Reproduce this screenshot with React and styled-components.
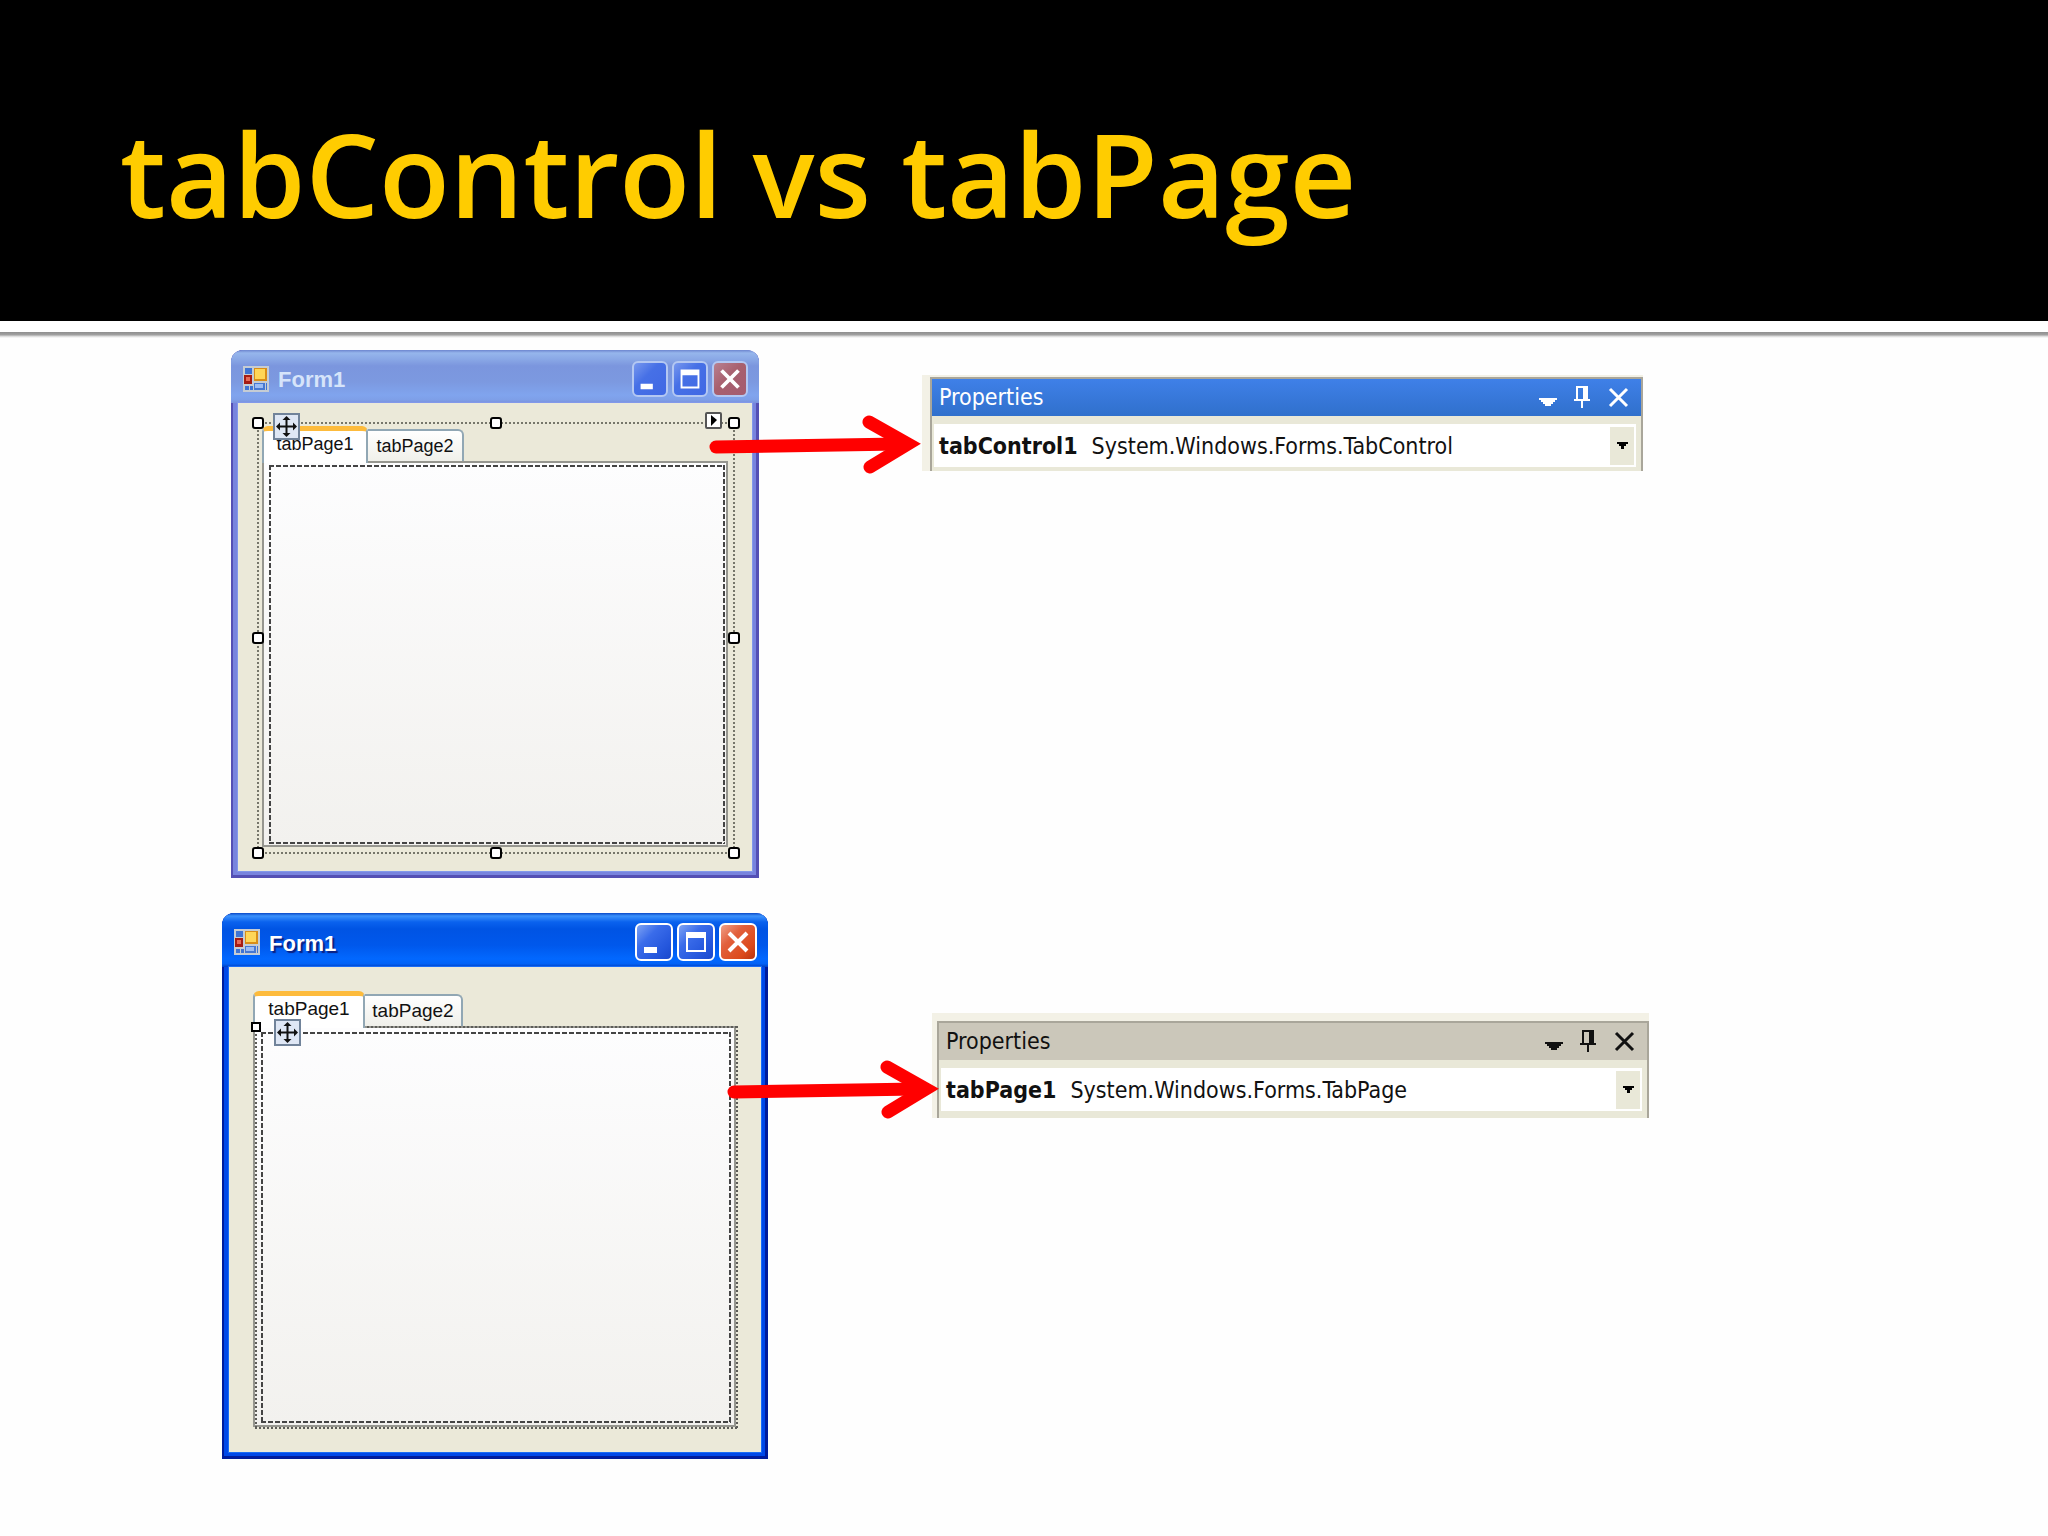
import { useId } from "react";
import styled, { createGlobalStyle, css } from "styled-components";

const GlobalStyle = createGlobalStyle`
    * {
        box-sizing: border-box;
    }
    body {
        margin: 0;
        background-color: #fefefe;
        font-family: "Liberation Sans", Arial, sans-serif;
    }
    button, select {
        font: inherit;
        color: inherit;
        margin: 0;
        padding: 0;
        border: 0;
        background: none;
    }
`;

const active = {
    frame: "#0048e8",
    edge: "#001c9c",
    light: "#1a6cf5",
    bar: "linear-gradient(#0a49c8 0, #3c92fc 3px, #0a62ee 9px, #0054e4 16px, #0058ec 60%, #0268ff 85%, #0262f6 94%, #0040c4 100%)",
    title: "#ffffff",
    titleShadow: "2px 2px 1px #0a1f80",
    buttonEdge: "#ffffff",
    button: "linear-gradient(135deg, #7fa4f4 0, #3a6cea 35%, #2456dc 75%, #1a48cc 100%)",
    close: "linear-gradient(135deg, #f0a088 0, #e2603c 35%, #dc4a1c 75%, #b83410 100%)",
};

const inactive = {
    frame: "#7884de",
    edge: "#5450b4",
    light: "#8298ea",
    bar: "linear-gradient(#6d85cf 0, #96b6ec 3px, #8aa8e6 9px, #7b96de 16px, #7c99e0 60%, #80a4ee 85%, #7e9fe8 94%, #7a90dc 100%)",
    title: "#d6e4fa",
    titleShadow: "none",
    buttonEdge: "#b4c8f2",
    button: "linear-gradient(135deg, #7898ee 0, #4670e6 40%, #4068e4 100%)",
    close: "linear-gradient(135deg, #b88090 0, #a8606e 45%, #a45c70 100%)",
};

const Header = styled.header`
    background-color: #000;
    padding: 93px 120px 68px;
`;

const Title = styled.h1`
    margin: 0;
    font-family: "Open Sans", "Noto Sans", sans-serif;
    font-size: 116px;
    font-weight: 600;
    line-height: 160px;
    color: #ffcc00;
`;

const Rule = styled.div`
    height: 17px;
    background: linear-gradient(#fff 11px, #8e8e8e 11px, #a2a2a2 14px, #d4d4d4 15px, #fefefe 17px);
`;

const Main = styled.main`
    display: flex;
    flex-direction: column;
    gap: 35px;
    padding: 12px 0 77px;
`;

const Row = styled.section`
    display: grid;
    grid-template-columns: ${(p) => p.$columns};
    align-items: start;
`;

const Window = styled.article`
    grid-column: 2;
    display: flex;
    flex-direction: column;
    aspect-ratio: 1;
    overflow: hidden;
    border-radius: 12px 12px 0 0;
    background-color: ${(p) => p.theme.frame};
    box-shadow: inset 2px 0 ${(p) => p.theme.edge}, inset -3px -3px ${(p) => p.theme.edge};
`;

const TitleBar = styled.div`
    display: flex;
    align-items: center;
    gap: 4px;
    height: ${(p) => p.$height};
    padding: 4px 11px 0 12px;
    background: ${(p) => p.theme.bar};
`;

const Caption = styled.h2`
    flex: 1;
    margin: 0;
    padding: 3px 0 0 5px;
    font-size: 22px;
    line-height: 26px;
    color: ${(p) => p.theme.title};
    text-shadow: ${(p) => p.theme.titleShadow};
`;

const CaptionButton = styled.button`
    width: ${(p) => p.$size};
    height: ${(p) => p.$size};
    border: 2px solid ${(p) => p.theme.buttonEdge};
    border-radius: 6px;
    background: ${(p) => (p.$close ? p.theme.close : p.theme.button)};

    svg {
        display: block;
        width: 100%;
    }
`;

const Client = styled.div`
    flex: 1;
    display: flex;
    margin: 0 7px 7px;
    padding: ${(p) => p.$padding};
    background-color: #ebe9d9;
    box-shadow: 0 0 0 1px ${(p) => p.theme.light};
`;

// dots or dashes along all four sides
const stitched = (on, period, color) => css`
    background-image:
        repeating-linear-gradient(90deg, ${color} 0 ${on}px, transparent ${on}px ${period}px),
        repeating-linear-gradient(90deg, ${color} 0 ${on}px, transparent ${on}px ${period}px),
        repeating-linear-gradient(${color} 0 ${on}px, transparent ${on}px ${period}px),
        repeating-linear-gradient(${color} 0 ${on}px, transparent ${on}px ${period}px);
    background-size: 100% 2px, 100% 2px, 2px 100%, 2px 100%;
    background-position: top, bottom, left, right;
    background-repeat: no-repeat;
`;

const TabControl = styled.div`
    position: relative;
    flex: 1;
    display: flex;
    flex-direction: column;
    ${(p) => p.$selected && css`
        padding: 4px 7px 7px 5px;
        ${stitched(2, 4, "#76766a")}
    `}
`;

const TabList = styled.div`
    display: flex;
    align-items: flex-end;
    height: 35px;
    font-size: ${(p) => p.$fontSize};
`;

const Tab = styled.button`
    width: ${(p) => p.$width};
    height: 32px;
    border: 2px solid #91a7b4;
    border-bottom: 0;
    border-left-width: 0;
    border-radius: 0 6px 0 0;
    background: linear-gradient(#fff, #f0f0ea);
    line-height: 26px;
    color: #111;

    &[aria-selected="true"] {
        position: relative;
        z-index: 1;
        height: 37px;
        margin-bottom: -2px;
        padding-bottom: 6px;
        border-left-width: 2px;
        border-top: 5px solid #fdbb3c;
        border-radius: 6px 6px 0 0;
        background: #fff;
    }
`;

const Page = styled.div`
    position: relative;
    flex: 1;
    display: flex;
    padding: 2px 1px 1px 5px;
    border: 2px solid #96968f;
    background: linear-gradient(#fdfdfe, #f2f1ee);

    ${(p) => p.$selected && css`
        padding: 4px 3px 2px 6px;
        &::after {
            content: "";
            position: absolute;
            inset: -2px -4px -4px 0;
            ${stitched(2, 4, "#5c5c58")}
        }
    `}
`;

const Grid = styled.div`
    flex: 1;
    ${stitched(5, 7, "#444")}
`;

const Handle = styled.span`
    position: absolute;
    z-index: 2;
    left: ${(p) => p.$x};
    top: ${(p) => p.$y};
    width: 12px;
    height: 12px;
    margin: -6px;
    border: 2px solid #000;
    border-radius: 3px;
    background-color: #fff;
`;

const PageHandle = styled(Handle)`
    width: 10px;
    height: 10px;
    margin: -5px;
    border-radius: 0;
`;

const MoveGlyph = styled.svg`
    position: absolute;
    z-index: 3;
    left: ${(p) => p.$left};
    top: ${(p) => p.$top};
    width: 27px;
    height: 27px;
`;

const SmartTag = styled.button`
    position: absolute;
    top: -10px;
    right: 13px;
    width: 17px;
    height: 17px;
    border: 2px solid #555;
    border-radius: 2px;
    background-color: #fff;

    svg {
        display: block;
        width: 100%;
    }
`;

const Arrow = styled.svg`
    grid-column: 3;
    position: relative;
    z-index: 2;
    width: 213px;
    height: 60px;
    margin: ${(p) => p.$margin};
`;

const Panel = styled.aside`
    grid-column: 4;
    margin-top: ${(p) => p.$top};
    padding: ${(p) => p.$padding};
    background-color: #f3f1e6;
    font-family: "DejaVu Sans Condensed", "DejaVu Sans", sans-serif;
    font-size: 23px;
    line-height: 28px;
`;

const PanelFrame = styled.div`
    padding-bottom: ${(p) => p.$bottom};
    border: 2px solid #a9a69a;
    border-bottom: 0;
    background-color: #e9e8d8;
`;

const PanelBar = styled.div`
    display: flex;
    align-items: center;
    height: 37px;
    padding: 0 11px 2px 7px;
    background: ${(p) => (p.$focused ? "linear-gradient(#3f80e8, #3070cc)" : "#cbc7ba")};
    color: ${(p) => (p.$focused ? "#fff" : "#111")};
`;

const PanelTitle = styled.h3`
    flex: 1;
    margin: 0;
    font-size: inherit;
    font-weight: 400;
`;

const PanelButton = styled.button`
    width: 22px;
    height: 24px;
    margin-left: 13px;

    svg {
        display: block;
    }
`;

const ObjectPicker = styled.div`
    display: flex;
    align-items: center;
    height: 43px;
    margin: 8px 5px 0 2px;
    padding: 3px 2px 3px 5px;
    background-color: #fff;
    color: #111;

    label {
        font-weight: 700;
    }
    select {
        flex: 1;
        height: 36px;
        margin-left: 14px;
        appearance: none;
        outline: 0;
    }
`;

const DropMark = styled.span`
    display: flex;
    align-items: center;
    justify-content: center;
    width: 24px;
    height: 38px;
    background-color: #e9e8d8;
`;

const FormIcon = () => (
    <svg width="26" height="26" viewBox="0 0 26 26" aria-hidden="true">
        <path fill="#c5ccd4" d="M0 0h26v26H0z" />
        <path fill="#3f74d4" d="M2 2h7v6H2zM2 20h4v4H2zM7 20h3v4H7zM23 17h1v7h-1z" />
        <path fill="#d98e18" d="M11 2h13v13H11z" />
        <path fill="#ffd657" d="M12 3h10v10H12z" />
        <path fill="#a61c14" d="M1 9h8v9H1z" />
        <path fill="#e66a58" d="M3 11h4v4H3z" />
        <path fill="#4778d2" d="M11 17h11v7H11z" />
        <path fill="#9cbcf4" d="M12 18h8v4h-8z" />
    </svg>
);

const Move = ({ left, top }) => (
    <MoveGlyph $left={left} $top={top} viewBox="0 0 27 27" aria-hidden="true">
        <rect x="1" y="1" width="25" height="25" fill="#dfe7f5" stroke="#71839a" strokeWidth="2" />
        <path stroke="#111" strokeWidth="2" d="M13.5 5v17M5 13.5h17" />
        <path fill="#111" d="M13.5 3l4 4h-8zM13.5 24l4-4h-8zM3 13.5l4-4v8zM24 13.5l-4-4v8z" />
    </MoveGlyph>
);

const FormWindow = ({ theme, barHeight, buttonSize, padding, children }) => (
    <Window theme={theme}>
        <TitleBar theme={theme} $height={barHeight}>
            <FormIcon />
            <Caption theme={theme}>Form1</Caption>
            <CaptionButton theme={theme} $size={buttonSize} aria-label="Minimize">
                <svg viewBox="0 0 34 34"><path fill="#fff" d="M7 22h13v6H7z" /></svg>
            </CaptionButton>
            <CaptionButton theme={theme} $size={buttonSize} aria-label="Maximize">
                <svg viewBox="0 0 34 34"><path fill="#fff" fillRule="evenodd" d="M7 7h20v20H7zM9 13h16v12H9z" /></svg>
            </CaptionButton>
            <CaptionButton theme={theme} $size={buttonSize} $close aria-label="Close">
                <svg viewBox="0 0 34 34"><path stroke="#fff" strokeWidth="4" d="M8 8l18 18M26 8L8 26" /></svg>
            </CaptionButton>
        </TitleBar>
        <Client theme={theme} $padding={padding}>{children}</Client>
    </Window>
);

const Tabs = ({ fontSize, widths }) => (
    <TabList role="tablist" $fontSize={fontSize}>
        <Tab role="tab" aria-selected="true" $width={widths[0]}>tabPage1</Tab>
        <Tab role="tab" aria-selected="false" $width={widths[1]}>tabPage2</Tab>
    </TabList>
);

const Connector = ({ margin }) => (
    <Arrow $margin={margin} viewBox="0 0 213 60" fill="none" stroke="#f00" strokeWidth="13" strokeLinecap="round" aria-hidden="true">
        <path d="M7 33L190 30" />
        <path d="M160 8L199 30L161 53" />
    </Arrow>
);

const Properties = ({ name, type, focused, top, padding, bottom }) => {
    const id = useId();

    return (
        <Panel $top={top} $padding={padding}>
            <PanelFrame $bottom={bottom}>
                <PanelBar $focused={focused}>
                    <PanelTitle>Properties</PanelTitle>
                    <PanelButton aria-label="Window position">
                        <svg width="22" height="24" viewBox="0 0 22 24"><path fill="currentColor" d="M1 13h18v2h-2v2h-2v2h-2v2H7v-2H5v-2H3v-2H1z" /></svg>
                    </PanelButton>
                    <PanelButton aria-label="Auto hide">
                        <svg width="22" height="24" viewBox="0 0 22 24"><path fill="currentColor" fillRule="evenodd" d="M3 1h12v13h2v2h-7v7H8v-7H1v-2h2zM5 3v11h5V3z" /></svg>
                    </PanelButton>
                    <PanelButton aria-label="Close">
                        <svg width="22" height="24" viewBox="0 0 22 24"><path stroke="currentColor" strokeWidth="3" d="M2 4l17 17M19 4L2 21" /></svg>
                    </PanelButton>
                </PanelBar>
                <ObjectPicker>
                    <label htmlFor={id}>{name}</label>
                    <select id={id}>
                        <option>{type}</option>
                    </select>
                    <DropMark>
                        <svg width="11" height="7" viewBox="0 0 11 7"><path fill="#000" d="M0 0h11v2H9v2H7v3H4V4H2V2H0z" /></svg>
                    </DropMark>
                </ObjectPicker>
            </PanelFrame>
        </Panel>
    );
};

const HANDLES = [
    ["1px", "1px"],
    ["50%", "1px"],
    ["calc(100% - 1px)", "1px"],
    ["1px", "50%"],
    ["calc(100% - 1px)", "50%"],
    ["1px", "calc(100% - 1px)"],
    ["50%", "calc(100% - 1px)"],
    ["calc(100% - 1px)", "calc(100% - 1px)"],
];

export default function App() {
    return (
        <>
            <GlobalStyle />
            <Header>
                <Title>tabControl vs tabPage</Title>
            </Header>
            <Rule />
            <Main>
                <Row $columns="231fr 528fr 163fr 721fr 405fr">
                    <FormWindow theme={inactive} barHeight="53px" buttonSize="36px" padding="19px 17px 17px 19px">
                        <TabControl $selected>
                            <Tabs fontSize="18px" widths={["106px", "96px"]} />
                            <Page>
                                <Grid />
                            </Page>
                            {HANDLES.map(([x, y]) => (
                                <Handle key={x + y} $x={x} $y={y} />
                            ))}
                            <Move left="16px" top="-9px" />
                            <SmartTag aria-label="TabControl tasks">
                                <svg viewBox="0 0 13 13"><path fill="#000" d="M4 1l6 5-6 6z" /></svg>
                            </SmartTag>
                        </TabControl>
                    </FormWindow>
                    <Connector margin="64px -20px 0 -50px" />
                    <Properties name="tabControl1" type="System.Windows.Forms.TabControl" focused top="25px" padding="2px 0 0 8px" bottom="4px" />
                </Row>
                <Row $columns="222fr 546fr 164fr 717fr 399fr">
                    <FormWindow theme={active} barHeight="54px" buttonSize="38px" padding="24px 25px 25px 24px">
                        <TabControl>
                            <Tabs fontSize="19px" widths={["112px", "98px"]} />
                            <Page $selected>
                                <Grid />
                                <PageHandle $x="1px" $y="-1px" />
                                <Move left="19px" top="-9px" />
                            </Page>
                        </TabControl>
                    </FormWindow>
                    <Connector margin="146px -20px 0 -41px" />
                    <Properties name="tabPage1" type="System.Windows.Forms.TabPage" top="100px" padding="8px 0 0 5px" bottom="7px" />
                </Row>
            </Main>
        </>
    );
}
